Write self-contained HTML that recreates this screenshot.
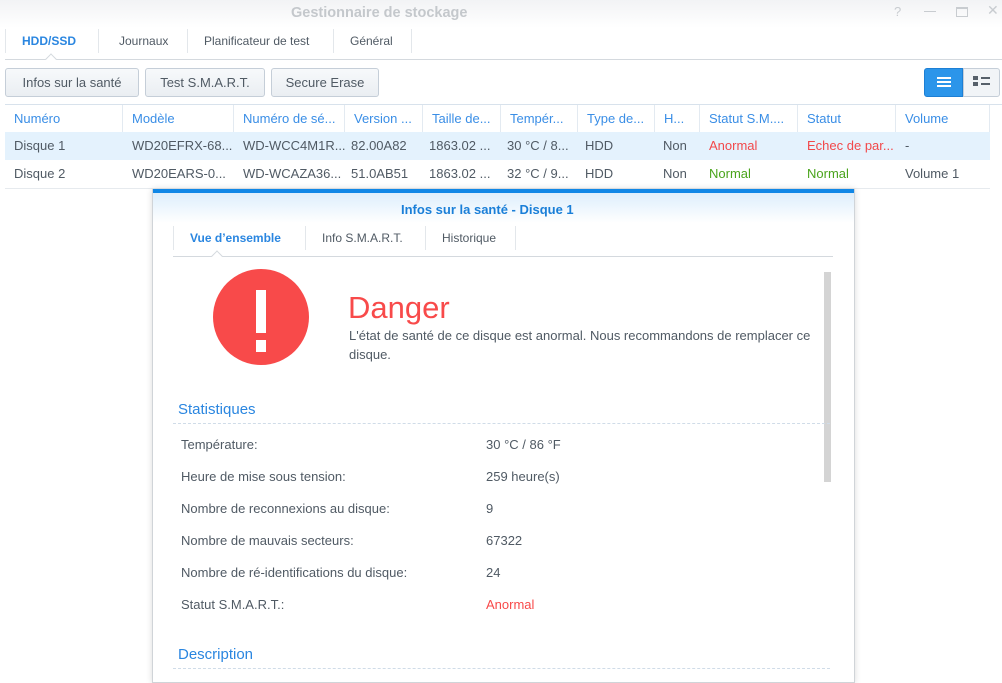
<!DOCTYPE html>
<html><head><meta charset="utf-8"><style>
*{margin:0;padding:0;box-sizing:border-box}
body{width:1002px;height:683px;overflow:hidden;background:#fff;font-family:"Liberation Sans",sans-serif;font-size:12px;color:#505a64;position:relative}
.a{position:absolute;white-space:nowrap}
.btn{position:absolute;top:68px;height:29px;border:1px solid #c5ced8;border-radius:3px;background:linear-gradient(#f7f9fb,#eaeef2);font-size:13px;color:#505a64;text-align:center;line-height:27px}
.th{position:absolute;top:105px;height:27px;line-height:27px;color:#3a8ee6;font-size:13px;padding-left:9px;border-right:1px solid #e3eaf1;overflow:hidden}
.td{position:absolute;height:28px;line-height:28px;font-size:13px;padding-left:9px;overflow:hidden}
.lbl{position:absolute;left:181px;font-size:13px;color:#505a64}
.val{position:absolute;left:486px;font-size:13px;color:#505a64}
</style></head><body>
<div class="a" style="left:0;top:0;width:1002px;height:28px;background:linear-gradient(#f2f3f5,#fff)"></div>
<div class="a" style="left:291px;top:5px;font-size:14.5px;font-weight:bold;color:#c4c8cc">Gestionnaire de stockage</div>
<div class="a" style="left:894px;top:4px;font-size:13px;color:#c8ccd0">?</div>
<div class="a" style="left:924px;top:11px;width:12px;height:1px;background:#c8ccd0"></div>
<div class="a" style="left:956px;top:7px;width:12px;height:10px;border:1px solid #c8ccd0;border-top-width:2px"></div>
<div class="a" style="left:987px;top:2px;font-size:14px;color:#c8ccd0">✕</div>
<!-- tabs -->
<div class="a" style="left:5px;top:29px;width:1px;height:24px;background:#e3e7eb"></div>
<div class="a" style="left:22px;top:34px;font-weight:bold;color:#2a86e0;font-size:12px">HDD/SSD</div>
<div class="a" style="left:98px;top:29px;width:1px;height:24px;background:#e3e7eb"></div>
<div class="a" style="left:119px;top:34px">Journaux</div>
<div class="a" style="left:187px;top:29px;width:1px;height:24px;background:#e3e7eb"></div>
<div class="a" style="left:204px;top:34px">Planificateur de test</div>
<div class="a" style="left:333px;top:29px;width:1px;height:24px;background:#e3e7eb"></div>
<div class="a" style="left:350px;top:34px">Général</div>
<div class="a" style="left:411px;top:29px;width:1px;height:24px;background:#e3e7eb"></div>
<div class="a" style="left:5px;top:59px;width:997px;height:1px;background:#d4d9de"></div>
<div class="a" style="left:47px;top:55px;width:8px;height:8px;background:#fff;border-left:1px solid #d4d9de;border-top:1px solid #d4d9de;transform:rotate(45deg)"></div>
<div class="btn" style="left:5px;width:134px">Infos sur la santé</div>
<div class="btn" style="left:145px;width:120px">Test S.M.A.R.T.</div>
<div class="btn" style="left:271px;width:108px">Secure Erase</div>
<div class="a" style="left:924px;top:68px;width:39px;height:29px;background:#2b95ea;border:1px solid #1d7fd4;border-radius:3px 0 0 3px"></div>
<div class="a" style="left:937px;top:77px;width:14px;height:2px;background:#fff;box-shadow:0 4px 0 #fff,0 8px 0 #fff"></div>
<div class="a" style="left:963px;top:68px;width:37px;height:29px;background:#f1f4f7;border:1px solid #c5ced8;border-radius:0 3px 3px 0"></div>
<div class="a" style="left:973px;top:76px;width:5px;height:4px;background:#56606a;box-shadow:0 6px 0 #56606a"></div>
<div class="a" style="left:981px;top:77px;width:9px;height:2px;background:#56606a;box-shadow:0 6px 0 #56606a"></div>
<!-- table -->
<div class="a" style="left:5px;top:104px;width:997px;height:1px;background:#d8e2ec"></div>
<div class="th" style="left:5px;width:118px">Numéro</div>
<div class="th" style="left:123px;width:111px">Modèle</div>
<div class="th" style="left:234px;width:111px">Numéro de sé...</div>
<div class="th" style="left:345px;width:78px">Version ...</div>
<div class="th" style="left:423px;width:78px">Taille de...</div>
<div class="th" style="left:501px;width:77px">Tempér...</div>
<div class="th" style="left:578px;width:77px">Type de...</div>
<div class="th" style="left:655px;width:45px">H...</div>
<div class="th" style="left:700px;width:98px">Statut S.M....</div>
<div class="th" style="left:798px;width:98px">Statut</div>
<div class="th" style="left:896px;width:94px">Volume</div>
<div class="a" style="left:5px;top:132px;width:985px;height:28px;background:#e4f2fd"></div>
<div class="a" style="left:5px;top:188px;width:985px;height:1px;background:#e6eaee"></div>
<div class="td" style="left:5px;top:132px">Disque 1</div>
<div class="td" style="left:123px;top:132px">WD20EFRX-68...</div>
<div class="td" style="left:234px;top:132px">WD-WCC4M1R...</div>
<div class="td" style="left:342px;top:132px">82.00A82</div>
<div class="td" style="left:420px;top:132px">1863.02 ...</div>
<div class="td" style="left:498px;top:132px">30 °C / 8...</div>
<div class="td" style="left:576px;top:132px">HDD</div>
<div class="td" style="left:654px;top:132px">Non</div>
<div class="td" style="left:700px;top:132px;color:#f2484a">Anormal</div>
<div class="td" style="left:798px;top:132px;color:#f2484a">Echec de par...</div>
<div class="td" style="left:896px;top:132px">-</div>
<div class="td" style="left:5px;top:160px">Disque 2</div>
<div class="td" style="left:123px;top:160px">WD20EARS-0...</div>
<div class="td" style="left:234px;top:160px">WD-WCAZA36...</div>
<div class="td" style="left:342px;top:160px">51.0AB51</div>
<div class="td" style="left:420px;top:160px">1863.02 ...</div>
<div class="td" style="left:498px;top:160px">32 °C / 9...</div>
<div class="td" style="left:576px;top:160px">HDD</div>
<div class="td" style="left:654px;top:160px">Non</div>
<div class="td" style="left:700px;top:160px;color:#4aa41c">Normal</div>
<div class="td" style="left:798px;top:160px;color:#4aa41c">Normal</div>
<div class="td" style="left:896px;top:160px">Volume 1</div>
<!-- dialog -->
<div class="a" style="left:152px;top:189px;width:703px;height:494px;background:#fff;border:1px solid #d0d4d8;border-top:none;box-shadow:0 0 6px rgba(0,0,0,.15)"></div>
<div class="a" style="left:153px;top:189px;width:701px;height:4px;background:#1087e6"></div>
<div class="a" style="left:153px;top:193px;width:701px;height:30px;background:linear-gradient(#ddeefc,#fff)"></div>
<div class="a" style="left:401px;top:202px;font-weight:bold;font-size:13px;color:#1a7fd8">Infos sur la santé - Disque 1</div>
<div class="a" style="left:173px;top:226px;width:1px;height:24px;background:#e3e7eb"></div>
<div class="a" style="left:190px;top:231px;font-weight:bold;color:#2a86e0">Vue d’ensemble</div>
<div class="a" style="left:305px;top:226px;width:1px;height:24px;background:#e3e7eb"></div>
<div class="a" style="left:322px;top:231px">Info S.M.A.R.T.</div>
<div class="a" style="left:425px;top:226px;width:1px;height:24px;background:#e3e7eb"></div>
<div class="a" style="left:442px;top:231px">Historique</div>
<div class="a" style="left:515px;top:226px;width:1px;height:24px;background:#e3e7eb"></div>
<div class="a" style="left:173px;top:256px;width:660px;height:1px;background:#d4d9de"></div>
<div class="a" style="left:213px;top:252px;width:8px;height:8px;background:#fff;border-left:1px solid #d4d9de;border-top:1px solid #d4d9de;transform:rotate(45deg)"></div>
<div class="a" style="left:824px;top:272px;width:7px;height:210px;background:#d4d4d4"></div>
<div class="a" style="left:213px;top:269px;width:96px;height:96px;border-radius:50%;background:#f84a4a"></div>
<div class="a" style="left:256px;top:290px;width:10px;height:43px;background:#fff"></div>
<div class="a" style="left:256px;top:340px;width:10px;height:12px;background:#fff"></div>
<div class="a" style="left:348px;top:290px;font-size:31px;color:#f84a4a">Danger</div>
<div class="a" style="left:349px;top:328px;font-size:13px">L'état de santé de ce disque est anormal. Nous recommandons de remplacer ce</div>
<div class="a" style="left:349px;top:347px;font-size:13px">disque.</div>
<div class="a" style="left:178px;top:401px;font-size:15px;color:#2a86e0">Statistiques</div>
<div class="a" style="left:173px;top:423px;width:657px;border-top:1px dashed #d0dce8"></div>
<div class="lbl" style="top:437px">Température:</div><div class="val" style="top:437px">30 °C / 86 °F</div>
<div class="lbl" style="top:469px">Heure de mise sous tension:</div><div class="val" style="top:469px">259 heure(s)</div>
<div class="lbl" style="top:501px">Nombre de reconnexions au disque:</div><div class="val" style="top:501px">9</div>
<div class="lbl" style="top:533px">Nombre de mauvais secteurs:</div><div class="val" style="top:533px">67322</div>
<div class="lbl" style="top:565px">Nombre de ré-identifications du disque:</div><div class="val" style="top:565px">24</div>
<div class="lbl" style="top:597px">Statut S.M.A.R.T.:</div><div class="val" style="top:597px;color:#f84a4a">Anormal</div>
<div class="a" style="left:178px;top:646px;font-size:15px;color:#2a86e0">Description</div>
<div class="a" style="left:173px;top:668px;width:657px;border-top:1px dashed #d0dce8"></div>
</body></html>
